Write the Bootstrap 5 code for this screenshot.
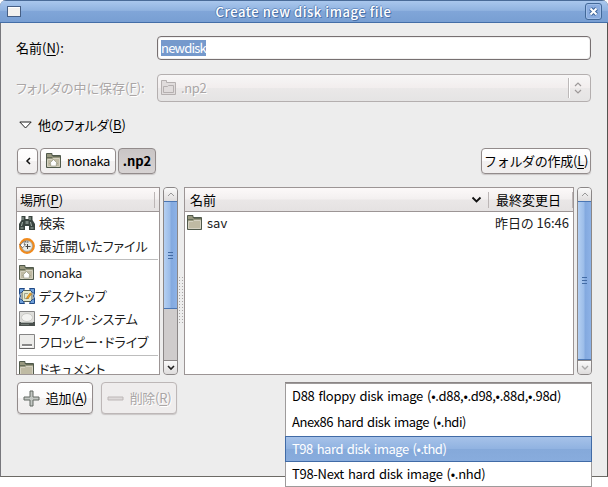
<!DOCTYPE html>
<html lang="ja">
<head>
<meta charset="utf-8">
<title>Create new disk image file</title>
<link href="https://cdn.jsdelivr.net/npm/bootstrap@5.3.0/dist/css/bootstrap.min.css" rel="stylesheet">
<style>
html,body{height:487px;overflow:hidden}
body{background:#fff;color:#000;font:13px/20px "Noto Sans CJK JP",sans-serif;font-feature-settings:"palt"}
svg{display:block;flex:none}
span{white-space:nowrap}
.dialog{width:608px;height:477px;background:#ededed;border:1px solid #6c6a65;border-left-color:#77777c;border-top:0;border-right-color:#55534f;border-radius:6px 6px 0 0}
.titlebar{height:23px;margin:0 -1px;background:linear-gradient(#4a6b98 0 1px,#a9c7ed 1px,#91b3e0 45%,#80a5d8 50%,#789fd3 95%,#446ea7 95%);border-radius:6px 6px 0 0;padding:0 6px 0 7px}
.caption{color:#fff;font-weight:500;text-shadow:1px 1px #4b71a7,-1px 0 #5f86bc,0 -1px #6c92c6;letter-spacing:.55px;margin-left:1px}
.close-box{width:17px;height:17px;border:1px solid #426898;border-radius:3px;background:#8bade0;box-shadow:inset 0 0 0 1px #a0bee8}
.main{padding:13px 16px 0 15px}
.label-col{width:141px}
.name-row,.field{height:24px}
.field{border:1px solid #777071;border-radius:4px;background:#fff;box-shadow:inset 0 0 0 1px #f1f0f0;padding-left:3px}
.picked{background:#7599cc;color:#fff;height:16px;line-height:15px;letter-spacing:-.8px}
.off{color:#aaa6a6;text-shadow:1px 1px #fff}
.combo-row{margin-top:14px}
.combo{height:28px;border:1px solid #b4afaf;border-radius:4px;background:linear-gradient(#f7f6f6,#f2eeee 48%,#eae8e8 52%,#e5e4e4);padding:0 8px 0 3px}
.combo-line{height:20px;border-left:1px solid #bdb9b9;box-shadow:inset 1px 0 #fff;padding-left:5px}
.expander{margin-top:13px;padding-left:3px;gap:6px}
.path-row{margin:13px 0 0 1px;gap:2px}
.gbtn{--bs-btn-border-color:#928b8b;--bs-btn-border-radius:4px;--bs-btn-padding-x:0;--bs-btn-padding-y:0;--bs-btn-color:#000;--bs-btn-font-size:13px;--bs-btn-line-height:20px;height:26px;display:flex;align-items:center;justify-content:center;background:linear-gradient(#fff,#fcfbfb 50%,#f3f1f1 52%,#f0eeee);box-shadow:0 1px 1px #c9c6c6}
.gbtn.down{background:linear-gradient(#c9c5c5,#d7d3d3);font-weight:700}
.gbtn.off{--bs-btn-border-color:#bdb7b7;background:#efeded}
.gbtn.big{width:76px;height:32px;gap:6px}
.btn-back{width:21px}.btn-home{width:76px;gap:5px}.btn-here{width:38px}.btn-new{width:110px}
.latin{letter-spacing:-.4px}
.browser{margin:13px -1px 0 0}
.places{width:144px;flex:none}
.pane{height:188px;border:1px solid #9c9595;background:#fff;overflow:hidden}
.pane-head{height:24px;background:linear-gradient(#fcf9f9,#f3f0f0 48%,#eae7e7 52%,#e5e2e2);border-bottom:1px solid #9c9595;padding-left:3px;margin-bottom:-1px}
.pane-head.files{padding-left:5px}
.split{width:1px;height:16px;background:#bcb6b6;flex:none}
.split-mid{margin:0 7px 0 6px}
.split-end{margin-left:11px}
.place{height:23px;padding-left:2px;gap:4px;color:#202020}
.when{margin-right:4px}
.rule{height:1px;background:#bdbdbd;margin:2px 1px 1px}
.sbar{width:15px;height:188px;flex:none;border:1px solid #8b8787;border-radius:4px;background:#cfcccc;overflow:hidden;margin-left:3px}
.cap{height:13px;flex:none;background:linear-gradient(#fafafa,#dedcdc)}
.cap.low{height:14px;border-top:1px solid #8b8787}
.thumb{background:linear-gradient(90deg,#b5d0f2,#9cbde9 45%,#83a9df 55%,#8db2e7);border:1px solid #4a76b4;margin:0 -1px}
.thumb.part{height:108px}.thumb.full{height:159px}
.grip{width:5px;height:7px;background:repeating-linear-gradient(#436ba4 0 1px,transparent 1px 3px)}
.dots{width:5px;height:47px;flex:none;margin:90px 0 0 1px;background:conic-gradient(from 0deg at 1px 1px,#0000 270deg,#aaa7a7 0) 0 0/3px 3px}
.actions{margin:7px 0 0 1px;gap:8px}
.types{position:absolute;left:285px;top:383px;width:307px;height:104px;border:1px solid #9e9b9b;background:#fff;box-shadow:0 -1px #8b8686}
.kind{height:26px;padding:0 0 2px 6px;letter-spacing:-.29px;word-spacing:1.4px}
.kind.snug{letter-spacing:-.46px}
.kind.sel{margin:0 -1px;padding-bottom:0;border:1px solid #416ba6;background:linear-gradient(#a6c2e9,#91b3e1 48%,#85a9da 52%,#88acdd);color:#fff}
.snug{letter-spacing:-.27px}
u{text-underline-offset:2px}
</style>
<script src="https://cdn.jsdelivr.net/npm/bootstrap@5.3.0/dist/js/bootstrap.bundle.min.js"></script>
</head>
<body>
<svg width="0" height="0" class="position-absolute">
<symbol id="folder" viewBox="0 0 16 16"><path d="M.5 14.500V.500h5.500v2h8.500v12z" fill="#98987f" stroke="#515a4c"/><path d="M1.500 13.500V6.500h4.500l1-1h6.500v8z" fill="#bfbaa3" stroke="#d5d2c2"/><path d="M1 4.500h5l1-1h7" fill="none" stroke="#656c59"/></symbol>
<symbol id="home" viewBox="0 0 16 16"><use href="#folder"/><path d="M3.500 10.500l4-4 4 4h-1.200v2.500H4.700v-2.500z" fill="#fff" stroke="#8a8b76" stroke-width=".6"/></symbol>
</svg>
<div class="dialog">
  <div class="titlebar d-flex align-items-center justify-content-between">
    <svg width="14" height="11"><rect x=".5" y=".5" width="13" height="10" fill="#f3f1ee" stroke="#465f85"/><path d="M1 1.500h12" stroke="#fff"/></svg>
    <span class="caption">Create new disk image file</span>
    <div class="close-box d-flex align-items-center justify-content-center"><svg width="9" height="9"><path d="M1.500 1.500l6 6m0-6l-6 6" stroke="#3e659a" stroke-width="4"/><path d="M1.500 1.500l6 6m0-6l-6 6" stroke="#fff" stroke-width="2"/></svg></div>
  </div>
  <div class="main">
    <div class="name-row d-flex align-items-center"><div class="label-col"><span>名前(<u>N</u>):</span></div><div class="field flex-grow-1 d-flex align-items-center"><span class="picked">newdisk</span></div></div>
    <div class="combo-row d-flex align-items-center"><div class="label-col off"><span>フォルダの中に保存(<u>F</u>):</span></div>
      <div class="combo off flex-grow-1 d-flex align-items-center"><svg width="16" height="16"><path d="M.5 14.500V.500h5v2h9v12zM2.500 12.500v-6h4l1-1h5v7z" fill="#e0dcdc" stroke="#b5b0b0"/></svg><span class="latin ms-1">.np2</span>
        <div class="combo-line ms-auto d-flex align-items-center"><svg width="8" height="12"><path d="M1 4l3-3 3 3M1 8l3 3 3-3" fill="none" stroke="#9d9999" stroke-width="1.200"/></svg></div></div></div>
    <div class="expander d-flex align-items-center"><svg width="13" height="8"><path d="M.8 1h11.400L6.500 7z" fill="#fff" stroke="#222"/></svg><span>他のフォルダ(<u>B</u>)</span></div>
    <div class="path-row d-flex">
      <button class="btn gbtn btn-back"><svg width="6" height="8"><path d="M5 1L2 4l3 3" fill="none" stroke="#111" stroke-width="1.500"/></svg></button>
      <button class="btn gbtn btn-home"><svg width="16" height="16"><use href="#home"/></svg><span class="latin">nonaka</span></button>
      <button class="btn gbtn down btn-here">.np2</button>
      <button class="btn gbtn ms-auto btn-new"><span class="snug">フォルダの作成(<u>L</u>)</span></button>
    </div>
    <div class="browser d-flex">
      <div class="pane places">
        <div class="pane-head d-flex align-items-center justify-content-between pe-1"><span>場所(<u>P</u>)</span><i class="split"></i></div>
        <div class="place d-flex align-items-center"><svg width="16" height="16"><path d="M2.500 1h4v3h3V1h4v4L16 9v6h-6v-4H6v4H0V9l2.500-4z" fill="#39443f"/><path d="M4 2v3m7-3v3M3.500 7L2.500 11m9-4l1 4M1.500 13h3m7 0h3" stroke="#a5b2aa"/><path d="M6.500 6h3v3h-3z" fill="#7d8983"/></svg><span>検索</span></div>
        <div class="place d-flex align-items-center"><svg width="16" height="16"><circle cx="8" cy="8" r="6.700" fill="#e9ebe7" stroke="#f08a1d" stroke-width="2.400"/><circle cx="8" cy="8" r="5.400" fill="none" stroke="#8c8c85" stroke-width=".6"/><path d="M.6 6.500l3 3.300 3-3.300H5q0-1.800 2-3-4 0-5 3z" fill="#fff" stroke="#555" stroke-width=".7"/><path d="M8.500 6v5M6.500 8.500h5m-2-4.500h-2" fill="none" stroke="#444"/></svg><span>最近開いたファイル</span></div>
        <div class="rule"></div>
        <div class="place d-flex align-items-center"><svg width="16" height="16"><use href="#home"/></svg><span class="latin">nonaka</span></div>
        <div class="place d-flex align-items-center"><svg width="16" height="16"><path d="M3 2.500h10v11H3z" fill="#e5e9cd" stroke="#595f51"/><path d="M.5.500h5l-1 2-2 2-2 1zM15.500.500h-5l1 2 2 2 2 1zM.5 15.500h5l-1-2-2-2-2-1zM15.500 15.500h-5l1-2 2-2 2-1zM.5 5l1 3-1 3M15.500 5l-1 3 1 3" fill="#6e9fd8" stroke="#204a87"/><path d="M9 5.500H5.500v5H10" fill="none" stroke="#9fa38e"/><path d="M8 9l3-4 1.500 1-3 4-2 .8z" fill="#f5a51d" stroke="#ad6511" stroke-width=".5"/></svg><span>デスクトップ</span></div>
        <div class="place d-flex align-items-center"><svg width="16" height="16"><path d="M.5.500h15v14H.5z" fill="#dededb" stroke="#888"/><ellipse cx="8" cy="6.500" rx="5.500" ry="4" fill="#f3f3f1" stroke="#c9c9c5"/><path d="M0 11h16v4H0z" fill="#4a504d"/><path d="M2 11.500h12" stroke="#a7ada9"/><path d="M2 13.500h8" stroke="#6c7570"/></svg><span>ファイル･システム</span></div>
        <div class="place d-flex align-items-center"><svg width="16" height="16"><path d="M.5.500h15v14H.5z" fill="#ececea" stroke="#858585"/><path d="M.5 14.500h15" stroke="#666"/><path d="M3 11h10" stroke="#454545" stroke-width="1.200"/><path d="M3 12.500h10" stroke="#fff"/></svg><span>フロッピー･ドライブ</span></div>
        <div class="rule"></div>
        <div class="place d-flex align-items-center"><svg width="16" height="16"><use href="#folder"/></svg><span>ドキュメント</span></div>
      </div>
      <div class="sbar d-flex flex-column"><div class="cap d-flex align-items-center justify-content-center"><svg width="8" height="5"><path d="M1 4l3-3 3 3" fill="none" stroke="#999"/></svg></div><div class="thumb part d-flex align-items-center justify-content-center"><i class="grip"></i></div><div class="cap low mt-auto d-flex align-items-center justify-content-center"><svg width="8" height="6"><path d="M1 1l3 3 3-3" fill="none" stroke="#222" stroke-width="1.600"/></svg></div></div>
      <div class="dots"></div>
      <div class="pane flex-grow-1">
        <div class="pane-head files d-flex align-items-center"><span>名前</span><svg width="11" height="7" class="ms-auto"><path d="M1.500 1.500l4 4 4-4" fill="none" stroke="#111" stroke-width="1.800"/></svg><i class="split split-mid"></i><span>最終変更日</span><i class="split split-end"></i></div>
        <div class="place d-flex align-items-center"><svg width="16" height="16"><use href="#folder"/></svg><span>sav</span><span class="ms-auto when">昨日の 16:46</span></div>
      </div>
      <div class="sbar d-flex flex-column"><div class="cap d-flex align-items-center justify-content-center"><svg width="8" height="5"><path d="M1 4l3-3 3 3" fill="none" stroke="#999"/></svg></div><div class="thumb full d-flex align-items-center justify-content-center"><i class="grip"></i></div><div class="cap low mt-auto d-flex align-items-center justify-content-center"><svg width="8" height="5"><path d="M1 1l3 3 3-3" fill="none" stroke="#aaa" stroke-width="1.400"/></svg></div></div>
    </div>
    <div class="actions d-flex">
      <button class="btn gbtn big"><svg width="17" height="17"><path d="M7 1h3v6h6v3h-6v6H7v-6H1V7h6z" fill="#c4c8c4" stroke="#626962"/></svg><span class="snug">追加(<u>A</u>)</span></button>
      <button class="btn gbtn off big"><svg width="17" height="17"><path d="M1 7h15v3H1z" fill="#dedada" stroke="#bdb7b7"/></svg><span class="snug">削除(<u>R</u>)</span></button>
    </div>
  </div>
</div>
<div class="types">
  <div class="kind d-flex align-items-center"><span>D88 floppy disk image (•.d88,•.d98,•.88d,•.98d)</span></div>
  <div class="kind snug d-flex align-items-center"><span>Anex86 hard disk image (•.hdi)</span></div>
  <div class="kind sel snug d-flex align-items-center"><span>T98 hard disk image (•.thd)</span></div>
  <div class="kind d-flex align-items-center"><span>T98-Next hard disk image (•.nhd)</span></div>
</div>
</body>
</html>
